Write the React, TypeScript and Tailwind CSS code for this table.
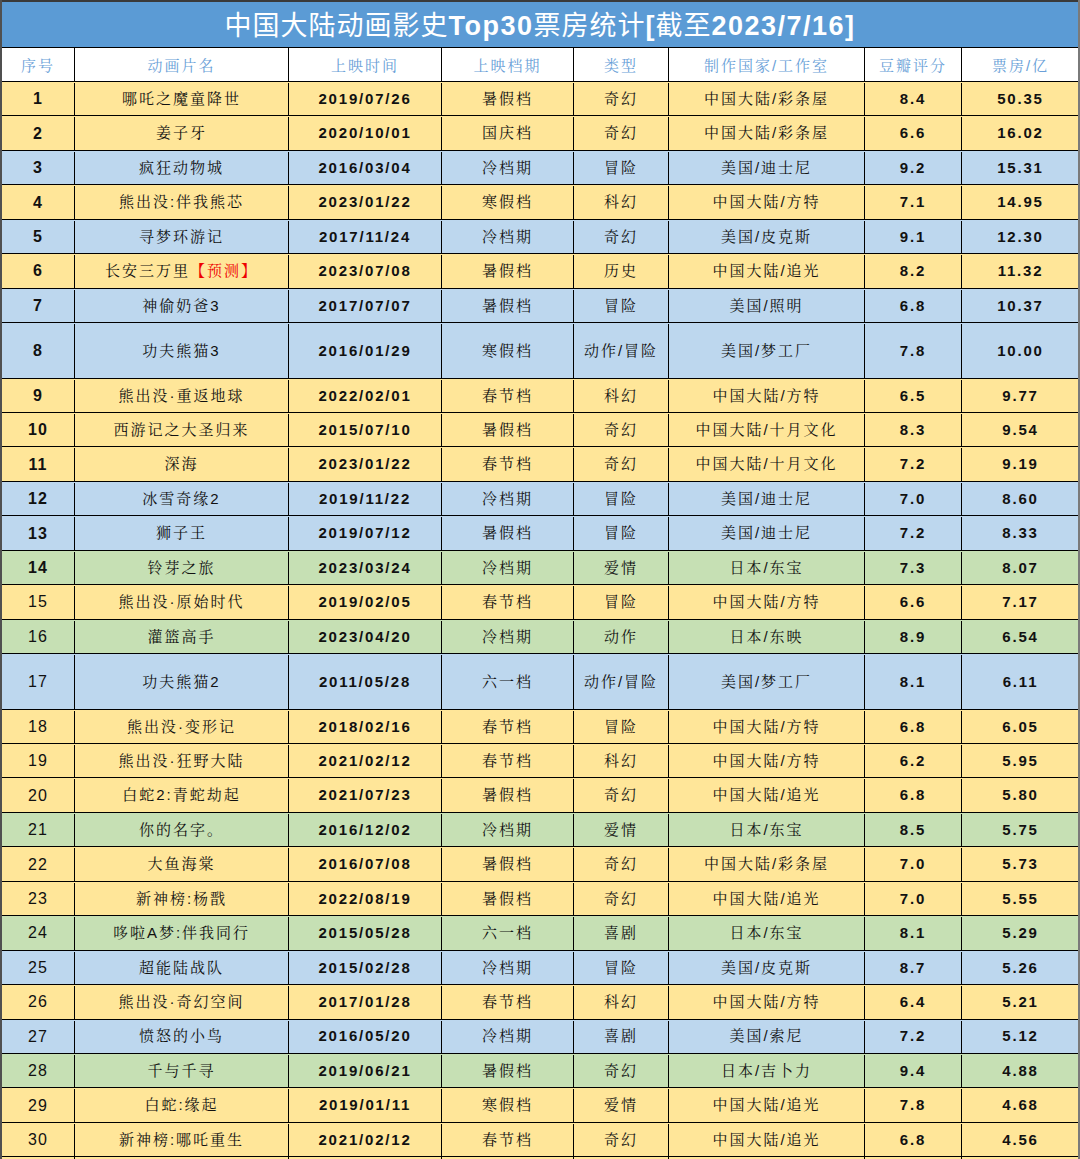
import React from "react";

type Row = [number, string, string, string, string, string, string, string, "Y" | "B" | "G", boolean?];

const rows: Row[] = [
  [1, "哪吒之魔童降世", "2019/07/26", "暑假档", "奇幻", "中国大陆/彩条屋", "8.4", "50.35", "Y"],
  [2, "姜子牙", "2020/10/01", "国庆档", "奇幻", "中国大陆/彩条屋", "6.6", "16.02", "Y"],
  [3, "疯狂动物城", "2016/03/04", "冷档期", "冒险", "美国/迪士尼", "9.2", "15.31", "B"],
  [4, "熊出没:伴我熊芯", "2023/01/22", "寒假档", "科幻", "中国大陆/方特", "7.1", "14.95", "Y"],
  [5, "寻梦环游记", "2017/11/24", "冷档期", "奇幻", "美国/皮克斯", "9.1", "12.30", "B"],
  [6, "长安三万里", "2023/07/08", "暑假档", "历史", "中国大陆/追光", "8.2", "11.32", "Y"],
  [7, "神偷奶爸3", "2017/07/07", "暑假档", "冒险", "美国/照明", "6.8", "10.37", "B"],
  [8, "功夫熊猫3", "2016/01/29", "寒假档", "动作/冒险", "美国/梦工厂", "7.8", "10.00", "B", true],
  [9, "熊出没·重返地球", "2022/02/01", "春节档", "科幻", "中国大陆/方特", "6.5", "9.77", "Y"],
  [10, "西游记之大圣归来", "2015/07/10", "暑假档", "奇幻", "中国大陆/十月文化", "8.3", "9.54", "Y"],
  [11, "深海", "2023/01/22", "春节档", "奇幻", "中国大陆/十月文化", "7.2", "9.19", "Y"],
  [12, "冰雪奇缘2", "2019/11/22", "冷档期", "冒险", "美国/迪士尼", "7.0", "8.60", "B"],
  [13, "狮子王", "2019/07/12", "暑假档", "冒险", "美国/迪士尼", "7.2", "8.33", "B"],
  [14, "铃芽之旅", "2023/03/24", "冷档期", "爱情", "日本/东宝", "7.3", "8.07", "G"],
  [15, "熊出没·原始时代", "2019/02/05", "春节档", "冒险", "中国大陆/方特", "6.6", "7.17", "Y"],
  [16, "灌篮高手", "2023/04/20", "冷档期", "动作", "日本/东映", "8.9", "6.54", "G"],
  [17, "功夫熊猫2", "2011/05/28", "六一档", "动作/冒险", "美国/梦工厂", "8.1", "6.11", "B", true],
  [18, "熊出没·变形记", "2018/02/16", "春节档", "冒险", "中国大陆/方特", "6.8", "6.05", "Y"],
  [19, "熊出没·狂野大陆", "2021/02/12", "春节档", "科幻", "中国大陆/方特", "6.2", "5.95", "Y"],
  [20, "白蛇2:青蛇劫起", "2021/07/23", "暑假档", "奇幻", "中国大陆/追光", "6.8", "5.80", "Y"],
  [21, "你的名字。", "2016/12/02", "冷档期", "爱情", "日本/东宝", "8.5", "5.75", "G"],
  [22, "大鱼海棠", "2016/07/08", "暑假档", "奇幻", "中国大陆/彩条屋", "7.0", "5.73", "Y"],
  [23, "新神榜:杨戬", "2022/08/19", "暑假档", "奇幻", "中国大陆/追光", "7.0", "5.55", "Y"],
  [24, "哆啦A梦:伴我同行", "2015/05/28", "六一档", "喜剧", "日本/东宝", "8.1", "5.29", "G"],
  [25, "超能陆战队", "2015/02/28", "冷档期", "冒险", "美国/皮克斯", "8.7", "5.26", "B"],
  [26, "熊出没·奇幻空间", "2017/01/28", "春节档", "科幻", "中国大陆/方特", "6.4", "5.21", "Y"],
  [27, "愤怒的小鸟", "2016/05/20", "冷档期", "喜剧", "美国/索尼", "7.2", "5.12", "B"],
  [28, "千与千寻", "2019/06/21", "暑假档", "奇幻", "日本/吉卜力", "9.4", "4.88", "G"],
  [29, "白蛇:缘起", "2019/01/11", "寒假档", "爱情", "中国大陆/追光", "7.8", "4.68", "Y"],
  [30, "新神榜:哪吒重生", "2021/02/12", "春节档", "奇幻", "中国大陆/追光", "6.8", "4.56", "Y"],
];

const widths = ["w-[73px]", "w-[214px]", "w-[153px]", "w-[132px]", "w-[95px]", "w-[196px]", "w-[97px]", "w-[117px]"];
const headers = ["序号", "动画片名", "上映时间", "上映档期", "类型", "制作国家/工作室", "豆瓣评分", "票房/亿"];

const bgMap = { Y: "bg-[#ffe699]", B: "bg-[#bdd7ee]", G: "bg-[#c6e0b4]" };

const CJK = "font-['Liberation_Sans','Noto_Serif_CJK_SC','Noto_Sans_CJK_SC',serif] text-[15px] tracking-[2px]";
const NUM = "font-['Liberation_Sans',Arial,sans-serif] text-[15px] font-bold tracking-[1.8px]";

function Cell({ i, children, last }: { i: number; children?: React.ReactNode; last?: boolean }) {
  return (
    <div className={`${widths[i]} shrink-0 h-full flex items-center justify-center ${last ? "" : "border-r border-black"}`}>
      {children}
    </div>
  );
}

export default function App() {
  return (
    <div className="w-[1080px] h-[1159px] overflow-hidden bg-white">
      <div className="w-[1080px] border-l-[2px] border-r-[2px] border-l-[#505050] border-r-[#7a7a7a]">
        <div className="h-[48px] pt-[4px] bg-[#5b9bd5] border-t-[2px] border-t-[#3a3a3a] border-b border-b-black flex items-center justify-center text-white text-[27px] tracking-[1px] font-['Liberation_Sans','Noto_Sans_CJK_SC',sans-serif]">
          <span>中国大陆动画影史</span>
          <span className="font-bold tracking-[1.5px]">Top30</span>
          <span>票房统计</span>
          <span className="font-bold">[</span>
          <span>截至</span>
          <span className="font-bold tracking-[1.5px]">2023/7/16]</span>
        </div>
        <div className="h-[34px] flex bg-white border-b border-black text-[#6a9fd8]">
          {headers.map((h, i) => (
            <Cell key={h} i={i} last={i === 7}>
              <span className={`${CJK} pt-[3px]`}>{h}</span>
            </Cell>
          ))}
        </div>
        {rows.map((r) => {
          const [n, name, date, slot, genre, studio, score, box, c, tall] = r;
          const bold = n <= 14;
          return (
            <div key={n} className={`flex border-b border-black text-[#111] pt-[1px] ${bgMap[c]} ${tall ? "h-[55.5px]" : "h-[34.45px]"}`}>
              <Cell i={0}>
                <span className={`font-['Liberation_Sans',Arial,sans-serif] text-[16px] tracking-[1px] ${bold ? "font-bold" : ""}`}>{n}</span>
              </Cell>
              <Cell i={1}>
                <span className={CJK}>
                  {name}
                  {n === 6 && <span className="text-[#ee0000]">【预测】</span>}
                </span>
              </Cell>
              <Cell i={2}>
                <span className={NUM}>{date}</span>
              </Cell>
              <Cell i={3}>
                <span className={CJK}>{slot}</span>
              </Cell>
              <Cell i={4}>
                <span className={CJK}>{genre}</span>
              </Cell>
              <Cell i={5}>
                <span className={CJK}>{studio}</span>
              </Cell>
              <Cell i={6}>
                <span className={NUM}>{score}</span>
              </Cell>
              <Cell i={7} last>
                <span className={NUM}>{box}</span>
              </Cell>
            </div>
          );
        })}
        <div className="h-[20px] flex bg-[#ffe699]">
          {widths.map((_, i) => (
            <Cell key={i} i={i} last={i === 7} />
          ))}
        </div>
      </div>
    </div>
  );
}
